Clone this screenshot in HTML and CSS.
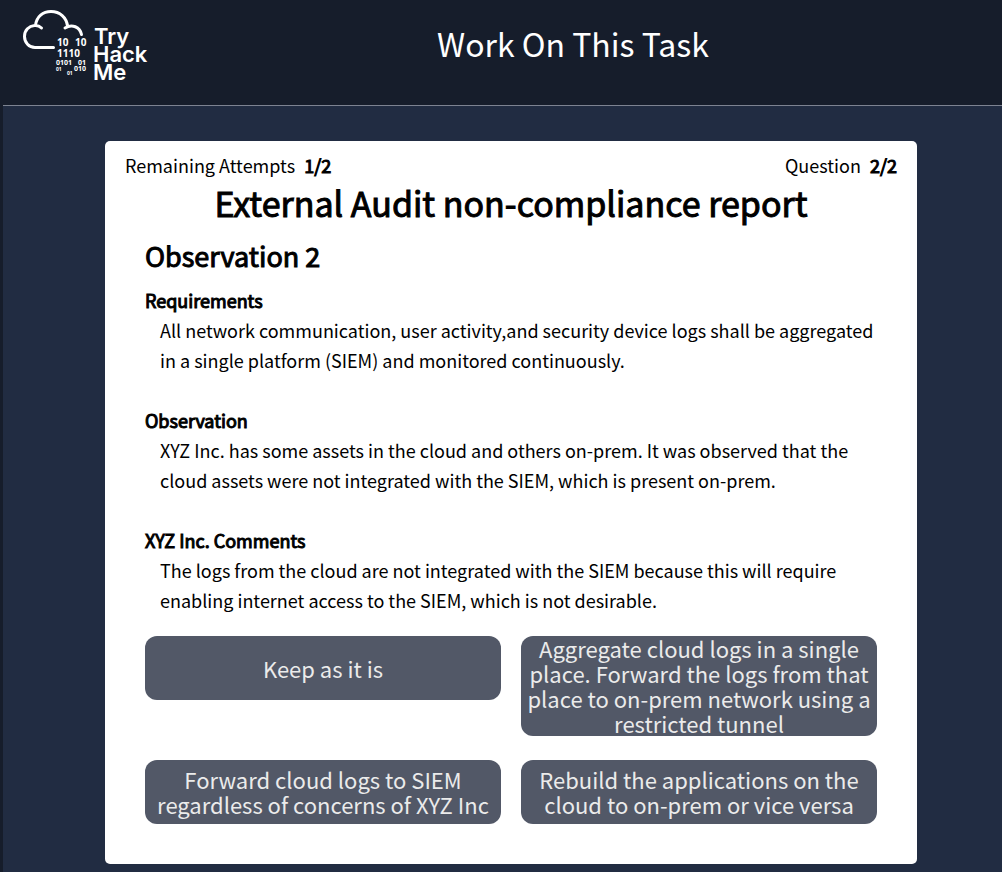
FILE: index.html
```html
<!DOCTYPE html>
<html lang="en">
<head>
<meta charset="utf-8">
<meta name="viewport" content="width=device-width, initial-scale=1">
<title>Work On This Task</title>
<link rel="stylesheet" href="styles.css">
</head>
<body>
<header class="topbar">
  <svg class="logo" viewBox="0 0 130 76" role="img" aria-label="TryHackMe">
    <path class="logo-cloud" d="M31.500 39.500H13C7 39.500 2.500 34.500 2.500 28.500C2.500 22 7 18 12.500 17.500C15 17.200 17.500 18 19.500 20M13.500 17.500C14.500 8.500 21 3.500 29 3.500C38 3.500 44.500 9.500 45.500 18M43 20C50 15.500 58 19 59.500 26.500"/>
    <g class="logo-bits">
      <text class="bits-lg" x="35" y="38">10</text>
      <text class="bits-lg" x="53" y="38">10</text>
      <text class="bits-lg" x="35" y="49">1110</text>
      <text class="bits-md" x="34" y="57">0101</text>
      <text class="bits-md" x="56" y="57">01</text>
      <text class="bits-sm" x="34" y="63">01</text>
      <text class="bits-md" x="52" y="63">010</text>
      <text class="bits-sm" x="45" y="67">01</text>
    </g>
    <g class="logo-word">
      <text x="72" y="36">Try</text>
      <text x="71" y="54">Hack</text>
      <text x="71" y="72">Me</text>
    </g>
  </svg>
  <h1 class="page-title">Work On This Task</h1>
</header>
<main class="stage">
  <article class="card">
    <div class="status">
      <p>Remaining Attempts <strong class="count">1/2</strong></p>
      <p>Question <strong class="count">2/2</strong></p>
    </div>
    <h2 class="report-title">External Audit non-compliance report</h2>
    <div class="report">
      <h3 class="report-name">Observation 2</h3>
      <section class="entry">
        <h4 class="entry-title">Requirements</h4>
        <p class="entry-text">All network communication, user activity,and security device logs shall be aggregated in a single platform (SIEM) and monitored continuously.</p>
      </section>
      <section class="entry">
        <h4 class="entry-title">Observation</h4>
        <p class="entry-text">XYZ Inc. has some assets in the cloud and others on-prem. It was observed that the cloud assets were not integrated with the SIEM, which is present on-prem.</p>
      </section>
      <section class="entry">
        <h4 class="entry-title">XYZ Inc. Comments</h4>
        <p class="entry-text">The logs from the cloud are not integrated with the SIEM because this will require enabling internet access to the SIEM, which is not desirable.</p>
      </section>
      <div class="answers">
        <button class="answer" type="button">Keep as it is</button>
        <button class="answer" type="button">Aggregate cloud logs in a single place. Forward the logs from that place to on-prem network using a restricted tunnel</button>
        <button class="answer" type="button">Forward cloud logs to SIEM regardless of concerns of XYZ Inc</button>
        <button class="answer" type="button">Rebuild the applications on the cloud to on-prem or vice versa</button>
      </div>
    </div>
  </article>
</main>
</body>
</html>
```
FILE: styles.css
```css
* {
  box-sizing: border-box;
  margin: 0;
}

body {
  display: flex;
  flex-direction: column;
  min-height: 100vh;
  padding-left: 3px;
  background: #161d2b;
  color: #000;
  font-family: "Noto Sans CJK SC", "Noto Sans", sans-serif;
  font-size: 18px;
  line-height: 30px;
}

.topbar {
  display: grid;
  grid-template-columns: 150px 1fr;
  align-items: start;
  height: 106px;
  padding: 8px 9px 0 0;
  border-bottom: 1px solid #7d8391;
}

.logo {
  width: 130px;
  height: 76px;
  margin-left: 19px;
}

.logo-cloud {
  fill: none;
  stroke: #fff;
  stroke-width: 3;
  stroke-linecap: round;
  stroke-linejoin: round;
}

.logo-bits,
.logo-word {
  fill: #fff;
}

.logo-bits {
  font-family: "Noto Sans", sans-serif;
  font-weight: 700;
}

.bits-lg {
  font-size: 10px;
}

.bits-md {
  font-size: 7px;
}

.bits-sm {
  font-size: 5px;
}

.logo-word {
  font-family: Inter, sans-serif;
  font-size: 22px;
  font-weight: 600;
}

.page-title {
  padding-top: 11px;
  color: #fff;
  font-size: 32px;
  font-weight: 400;
  line-height: 48px;
  text-align: center;
}

.stage {
  flex: 1;
  padding: 35px 85px 8px 102px;
  background: #212c42;
}

.card {
  padding: 9px 20px 40px;
  border-radius: 5px;
  background: #fff;
}

.status {
  display: flex;
  justify-content: space-between;
}

.count,
.report-title,
.report-name,
.entry-title {
  font-weight: 400;
  -webkit-text-stroke: 1px #000;
}

.count {
  margin-left: 5px;
}

.report-title {
  font-size: 34px;
  line-height: 46px;
  text-align: center;
}

.report {
  padding: 10px 20px 0;
}

.report-name {
  font-size: 27px;
  line-height: 40px;
}

.entry {
  padding-bottom: 30px;
}

.report-name + .entry {
  padding-top: 9px;
}

.entry-title {
  font-size: 18px;
}

.entry-text {
  padding-left: 15px;
}

.answers {
  display: grid;
  grid-template-columns: 1fr 1fr;
  align-items: start;
  gap: 24px 20px;
  margin-top: -9px;
}

.answer {
  min-height: 64px;
  padding: 0 6px;
  border: 0;
  border-radius: 12px;
  background: #525867;
  color: #ebebeb;
  font-family: inherit;
  font-size: 22px;
  line-height: 25px;
}
```
